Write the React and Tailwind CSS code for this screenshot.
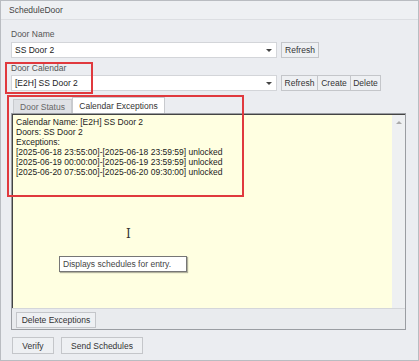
import React from 'react';

// Small flat WinForms-like button
const Btn = ({ children, className = '' }) => (
  <button className={`flex h-[16px] items-center justify-center border border-[#c4c6ca] bg-[#eef0f3] text-[8.5px] leading-[10px] text-[#333] ${className}`}>
    {children}
  </button>
);

const Combo = ({ value }) => (
  <div className="flex h-[16px] w-[266px] items-center justify-between border border-[#d3d5d9] bg-white pl-[3px] pr-[4px] text-[8.5px] text-[#222]">
    <span>{value}</span>
    <svg width="6" height="3" viewBox="0 0 6 3"><path d="M0 0h6L3 3z" fill="#444" /></svg>
  </div>
);

const lines = [
  'Calendar Name: [E2H] SS Door 2',
  'Doors: SS Door 2',
  'Exceptions:',
  '[2025-06-18 23:55:00]-[2025-06-18 23:59:59] unlocked',
  '[2025-06-19 00:00:00]-[2025-06-19 23:59:59] unlocked',
  '[2025-06-20 07:55:00]-[2025-06-20 09:30:00] unlocked',
];

export default function App() {
  return (
    <div
      className="relative h-[361px] w-[419px] overflow-hidden border border-[#b9bcc1] bg-[#ebedf1] text-[8.5px] leading-[10px] text-[#333]"
      style={{ fontFamily: '"Liberation Sans", Arial, sans-serif' }}
    >
      {/* title */}
      <div className="flex h-[19px] items-center border-b border-[#dcdee2] bg-[#eef0f3] pl-[8px] text-[#444]">ScheduleDoor</div>

      <div className="flex flex-col px-[10px]">
        <div className="mt-[9px] h-[10px] text-[#555]">Door Name</div>
        <div className="mt-[3px] flex items-center gap-[4px]">
          <Combo value="SS Door 2" />
          <Btn className="w-[38px]">Refresh</Btn>
        </div>

        <div className="mt-[5px] h-[10px] text-[#555]">Door Calendar</div>
        <div className="mt-[2px] flex items-center gap-[4px]">
          <Combo value="[E2H] SS Door 2" />
          <div className="flex">
            <Btn className="w-[37px]">Refresh</Btn>
            <Btn className="-ml-px w-[34px]">Create</Btn>
            <Btn className="-ml-px w-[31px]">Delete</Btn>
          </div>
        </div>

        {/* tabs */}
        <div className="mt-[6px] flex h-[16px] items-end pl-[2px]">
          <div className="flex h-[14px] w-[59px] items-center justify-center border border-b-0 border-[#c8cace] bg-[#dfe1e5] text-[#666]">Door Status</div>
          <div className="flex h-[16px] w-[93px] items-center justify-center border border-b-0 border-[#c8cace] bg-white text-[#333]">Calendar Exceptions</div>
        </div>

        {/* tab page */}
        <div className="flex h-[217px] w-[395px] flex-col border border-[#9a9da2] bg-[#e9ebee]">
          <div className="flex h-[194px]">
            <div className="flex-1 border-l border-t border-[#444] bg-[#ffffe1] pl-[3px] pt-[2px] leading-[10px] text-[#222]">
              {lines.map((l) => (
                <div key={l}>{l}</div>
              ))}
            </div>
            <div className="flex w-[13px] justify-center border-t border-[#444] bg-[#eef0f2] pt-[6px]">
              <svg width="6" height="3" viewBox="0 0 6 3"><path d="M3 0L6 3H0z" fill="#aaa" /></svg>
            </div>
          </div>
          <div className="border-t border-[#d4d6da] pl-[4px] pt-[3px]">
            <Btn className="w-[80px]">Delete Exceptions</Btn>
          </div>
        </div>

        <div className="mt-[7px] flex gap-[7px] pl-[1px]">
          <Btn className="h-[17px] w-[42px]">Verify</Btn>
          <Btn className="h-[17px] w-[82px]">Send Schedules</Btn>
        </div>
      </div>

      {/* I-beam cursor */}
      <div className="absolute left-[125px] top-[227px] text-[12px] leading-[12px] text-[#333]" style={{ fontFamily: '"DejaVu Serif", serif' }}>I</div>

      {/* tooltip */}
      <div className="absolute left-[58px] top-[255px] flex h-[16px] w-[128px] items-center border border-[#767676] bg-white px-[3px] text-[8.5px] text-[#444] shadow-[1px_1px_1px_rgba(0,0,0,0.3)]">
        Displays schedules for entry.
      </div>

      {/* red annotation boxes */}
      <div className="pointer-events-none absolute left-[4px] top-[61px] h-[32px] w-[88px] border-2 border-[#e0393e]" />
      <div className="pointer-events-none absolute left-[6px] top-[94px] h-[102px] w-[237px] border-2 border-[#e0393e]" />
    </div>
  );
}
